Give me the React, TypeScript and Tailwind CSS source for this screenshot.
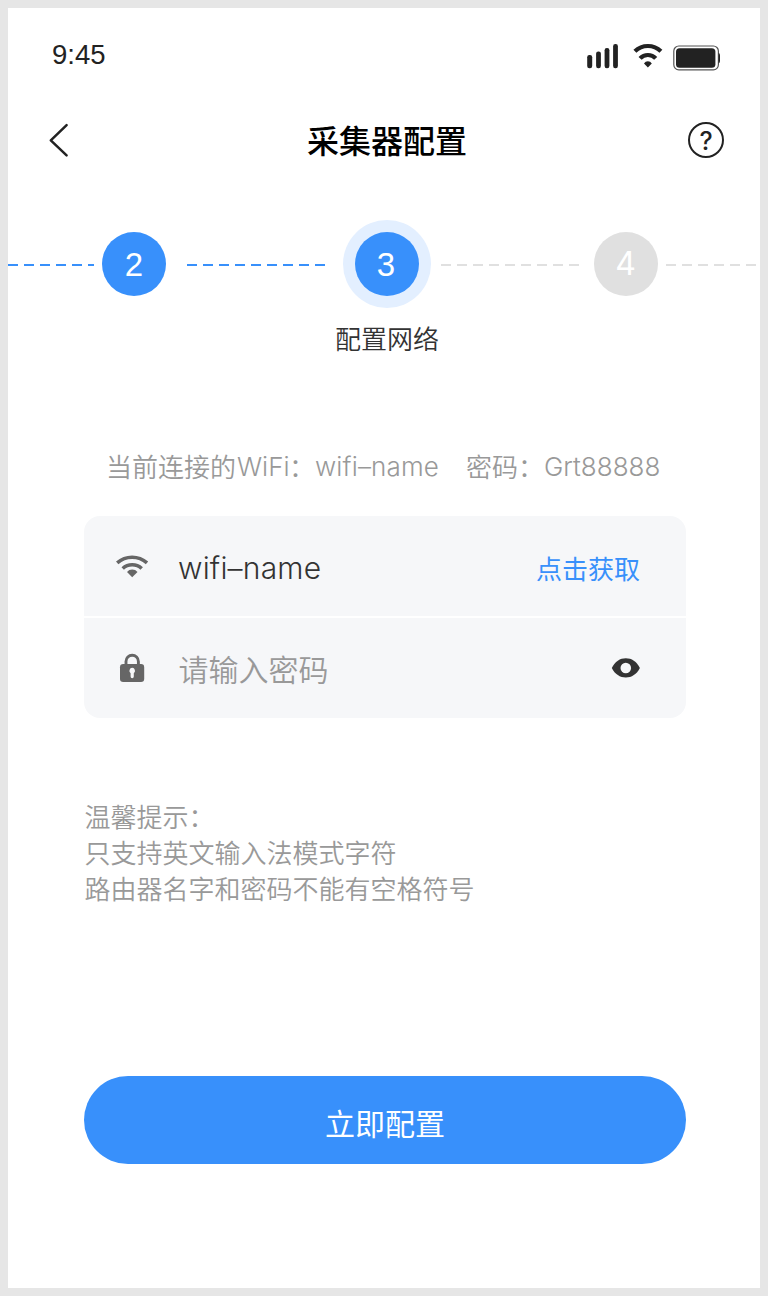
import React from "react";

function StatusBar() {
  return (
    <div className="flex h-[92px] items-start justify-between pl-[44px] pr-[40px] text-[#222]">
      <span className="mt-[30px] font-['Liberation_Sans',sans-serif] text-[27.5px] leading-[34px]">9:45</span>
      <svg className="mt-[34px]" width="134" height="30" viewBox="586 42 134 30" fill="#222">
        <rect x="587.2" y="55" width="5" height="13.2" rx="2.2" />
        <rect x="596.1" y="51.6" width="4.8" height="16.6" rx="2.2" />
        <rect x="604.6" y="48" width="4.8" height="20.2" rx="2.2" />
        <rect x="613.1" y="44" width="4.8" height="24.2" rx="2.2" />
        <g fill="none" stroke="#222" strokeWidth="4.2">
          <path d="M634.9 51.3A18.6 18.6 0 0 1 660.9 51.3" />
          <path d="M640.1 58.4A10.6 10.6 0 0 1 655.7 58.4" />
        </g>
        <path d="M644 63.4Q645.4 61.3 647.9 61.3Q650.4 61.3 651.8 63.4L647.9 67.5Z" />
        <rect x="673.8" y="46" width="44.6" height="23.8" rx="5" fill="white" stroke="#555" strokeWidth="1.2" />
        <rect x="676" y="48.2" width="39.4" height="19.6" rx="3.6" />
        <path d="M718.6 52.7Q720 53.4 720 55.2V61Q720 62.8 718.6 63.4Z" />
      </svg>
    </div>
  );
}

function Header() {
  return (
    <header className="flex h-[80px] items-center justify-between pl-[40px] pr-[36px]">
      <svg width="22" height="36" viewBox="48 122 22 36" fill="none" stroke="#222" strokeWidth="2.5" strokeLinecap="round" strokeLinejoin="round">
        <path d="M66.6 125.2L50.8 140.3L66.6 155.4" />
      </svg>
      <h1 className="mb-[2px] ml-[16px] text-[32px] font-medium leading-[40px] text-black">采集器配置</h1>
      <div className="flex size-[36px] items-center justify-center rounded-full border-[2.4px] border-[#222] pt-[2px] font-['Inter',sans-serif] text-[25px] font-[450] leading-none text-[#222]">
        ?
      </div>
    </header>
  );
}

const blueDash = "h-[2px] shrink-0 bg-[repeating-linear-gradient(90deg,#3890fb_0_10px,transparent_10px_16px)]";
const grayDash = "h-[2px] shrink-0 bg-[repeating-linear-gradient(90deg,#e0e0e0_0_10px,transparent_10px_16px)]";

function Steps() {
  return (
    <section>
      <div className="mt-[40px] flex h-[88px] items-center font-['Liberation_Sans',sans-serif] text-[33px] text-white">
        <div className={`${blueDash} mt-[2px] w-[86px]`} />
        <div className="ml-[8px] flex size-[64px] shrink-0 items-center justify-center rounded-full bg-[#3890fb] pt-[2px]">2</div>
        <div className={`${blueDash} ml-[20.5px] mt-[2px] w-[138.5px]`} />
        <div className="ml-[18px] flex size-[88px] shrink-0 items-center justify-center rounded-full bg-[#e3efff]">
          <div className="flex size-[64px] items-center justify-center rounded-full bg-[#3890fb] pr-[2px] pt-[2px]">3</div>
        </div>
        <div className={`${grayDash} ml-[10px] mt-[2px] w-[139px]`} />
        <div className="ml-[13.5px] flex size-[64px] shrink-0 items-center justify-center rounded-full bg-[#e0e0e0] pb-[1px] font-['Inter',sans-serif] text-[32px]">
          4
        </div>
        <div className={`${grayDash} ml-[8.5px] mt-[2px] w-[90px]`} />
      </div>
      <p className="ml-[327px] mt-[12px] text-[26px] font-[350] leading-[36px] text-[#333]">配置网络</p>
    </section>
  );
}

function WifiIcon() {
  return (
    <svg width="34" height="26" viewBox="115 554 34 26" fill="#666">
      <g fill="none" stroke="#666" strokeWidth="3.6">
        <path d="M117.2 563.8A22.6 22.6 0 0 1 147 563.8" />
        <path d="M122.7 569.5A14 14 0 0 1 141.7 569.5" />
      </g>
      <path d="M127 573Q129 570.6 132.2 570.6Q135.4 570.6 137.5 573L132.2 578.2Z" />
    </svg>
  );
}

function LockIcon() {
  return (
    <svg width="34" height="30" viewBox="115 653 34 30">
      <path d="M126 666V661.4A6.2 6.2 0 0 1 138.4 661.4V666" fill="none" stroke="#666" strokeWidth="2.9" />
      <rect x="120" y="664" width="24.2" height="18" rx="3.2" fill="#666" />
      <path d="M132.2 667.8A3 3 0 0 1 133.8 673.2V676.6A1.6 1.6 0 0 1 130.6 676.6V673.2A3 3 0 0 1 132.2 667.8Z" fill="#f6f7f9" />
    </svg>
  );
}

function EyeIcon() {
  return (
    <svg width="30" height="22" viewBox="611 657 30 22">
      <path d="M611.8 668C615 661.5 620 658.3 625.8 658.3S636.7 661.5 639.9 668C636.7 674.3 631.6 677.5 625.8 677.5S615 674.3 611.8 668Z" fill="#333" />
      <circle cx="625.8" cy="668" r="5.3" fill="#f6f7f9" />
    </svg>
  );
}

export default function App() {
  return (
    <main className="flex h-[1296px] w-[768px] flex-col overflow-hidden border-8 border-[#e6e6e6] bg-white font-['Noto_Sans_CJK_SC',sans-serif]">
      <StatusBar />
      <Header />
      <Steps />

      <div className="ml-[98px] mt-[92px] flex whitespace-nowrap text-[26px] font-[350] leading-[36px] text-[#999]">
        <span className="w-[131px]">当前连接的</span>
        <span className="mt-[1px] w-[52px] font-['Inter',sans-serif]">WiFi</span>
        <span className="w-[26px]">：</span>
        <span className="mt-[1px] w-[151px] font-['Inter',sans-serif] tracking-[0.15px]">wifi–name</span>
        <span className="w-[78px]">密码：</span>
        <span className="mt-[1px] font-['Inter',sans-serif]">Grt88888</span>
      </div>

      <section className="ml-[76px] mt-[31px] flex w-[602px] flex-col gap-[2px] overflow-hidden rounded-[16px]">
        <div className="flex h-[100px] items-center bg-[#f6f7f9] pl-[31px] pr-[46px]">
          <WifiIcon />
          <span className="ml-[29px] mt-[4px] font-['Inter',sans-serif] text-[30px] font-[350] leading-[40px] tracking-[0.2px] text-[#333]">wifi–name</span>
          <button className="ml-auto mt-[4px] text-[26px] leading-[36px] text-[#3890fb]">点击获取</button>
        </div>
        <div className="flex h-[100px] items-center bg-[#f6f7f9] pl-[31px] pr-[45px]">
          <LockIcon />
          <span className="ml-[29.5px] text-[30px] font-[350] leading-[40px] text-[#999]">请输入密码</span>
          <span className="ml-auto"><EyeIcon /></span>
        </div>
      </section>

      <div className="ml-[76.5px] mt-[80px] text-[26px] font-[350] leading-[36px] text-[#999]">
        <p>温馨提示：</p>
        <p>只支持英文输入法模式字符</p>
        <p>路由器名字和密码不能有空格符号</p>
      </div>

      <button className="ml-[76px] mt-[170px] flex h-[88px] w-[602px] shrink-0 items-center justify-center rounded-full bg-[#3890fb] pt-[3px] text-[30px] leading-[40px] text-white">
        立即配置
      </button>
    </main>
  );
}
